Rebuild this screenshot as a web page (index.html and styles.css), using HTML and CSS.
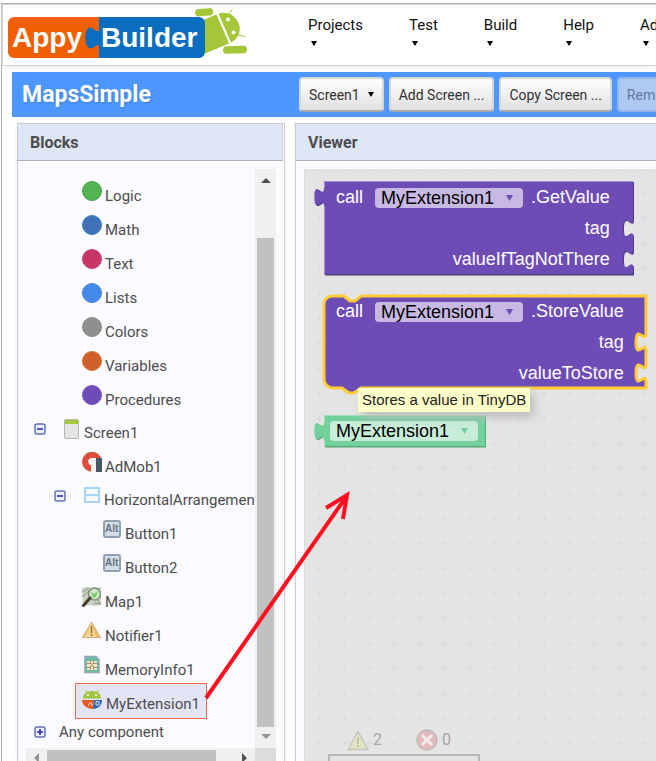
FILE: index.html
```html
<!DOCTYPE html>
<html lang="en">
<head>
<meta charset="utf-8">
<title>AppyBuilder - MapsSimple</title>
<link rel="stylesheet" href="styles.css">
</head>
<body>
<div class="app">
  <header class="top">
    <svg class="logo" width="242" height="50" viewBox="7 8 242 50" role="img" aria-label="AppyBuilder">
      <g fill="#a4c639">
        <path d="M203 20 216.500 14.500 229 43.500 204 54z"/>
        <path d="M218.500 13.500C228 10.500 236 16 239 24C241.500 32 238 38.500 231 42.500z"/>
        <rect x="195" y="8.500" width="18" height="7.500" rx="3.700" transform="rotate(-4 204 12)"/>
        <rect x="223" y="46" width="24" height="7.500" rx="3.700" transform="rotate(-2 235 50)"/>
        <path d="m229 14 3.500-5M238 35l7 1.500" stroke="#a4c639" stroke-width="1"/>
      </g>
      <circle cx="228" cy="19.500" r="2" fill="#fff"/><circle cx="233.500" cy="32.500" r="2" fill="#fff"/>
      <path d="M14 17H100V58H14a6 6 0 0 1-6-6V23a6 6 0 0 1 6-6z" fill="#f25f03"/>
      <path d="M99 17h100a6 6 0 0 1 6 6v29a6 6 0 0 1-6 6H99V45c-3-1-5 4-9 3.500c-6-2-6-19-1-21c4-1 6 5 10 3z" fill="#0b6dbd"/>
      <g class="logo-text"><text x="12" y="47">Appy</text><text x="101" y="47">Builder</text></g>
    </svg>
    <nav class="menu">
      <button type="button">Projects<svg width="6" height="5"><path d="M0 0h6L3 5z"/></svg></button>
      <button type="button">Test<svg width="6" height="5"><path d="M0 0h6L3 5z"/></svg></button>
      <button type="button">Build<svg width="6" height="5"><path d="M0 0h6L3 5z"/></svg></button>
      <button type="button">Help<svg width="6" height="5"><path d="M0 0h6L3 5z"/></svg></button>
      <button type="button">Admin<svg width="6" height="5"><path d="M0 0h6L3 5z"/></svg></button>
    </nav>
  </header>

  <div class="toolbar">
    <h1>MapsSimple</h1>
    <button type="button" aria-haspopup="menu">Screen1<svg width="6" height="5"><path d="M0 0h6L3 5z"/></svg></button>
    <button type="button">Add Screen ...</button>
    <button type="button">Copy Screen ...</button>
    <button type="button" disabled>Remove Screen</button>
  </div>

  <main class="panels">
    <section class="panel blocks">
      <h2>Blocks</h2>
      <div class="scroller">
        <ul class="tree">
          <li class="built-in">
            <ul>
              <li><a class="node" href="#"><i class="dot logic"></i>Logic</a></li>
              <li><a class="node" href="#"><i class="dot math"></i>Math</a></li>
              <li><a class="node" href="#"><i class="dot text"></i>Text</a></li>
              <li><a class="node" href="#"><i class="dot lists"></i>Lists</a></li>
              <li><a class="node" href="#"><i class="dot colors"></i>Colors</a></li>
              <li><a class="node" href="#"><i class="dot variables"></i>Variables</a></li>
              <li><a class="node" href="#"><i class="dot procedures"></i>Procedures</a></li>
            </ul>
          </li>
          <li>
            <div class="branch">
              <button type="button" class="toggle" aria-label="Collapse Screen1"><svg width="12" height="12"><rect x="1" y="1" width="10" height="10" rx="2"/><path d="M3 6h6"/></svg></button>
              <a class="node" href="#"><svg width="20" height="20"><rect x="2.500" y=".5" width="14" height="19" rx="1.500" fill="#e4e4e4" stroke="#b5b5b5"/><path d="M3 1h13v4H3z" fill="#a8c83c"/></svg>Screen1</a>
            </div>
            <ul>
              <li><a class="node" href="#"><svg width="20" height="20"><path d="M10 16.500A6.700 6.700 0 1 1 16.600 9" fill="none" stroke="#dc4f3e" stroke-width="6.500"/><path d="M6 9q1-3 5-3h3v14H9v-9z" fill="#f4f4f6"/><path d="M14 6h6v14h-6z" fill="#455a64"/></svg>AdMob1</a></li>
              <li>
                <div class="branch">
                  <button type="button" class="toggle" aria-label="Collapse HorizontalArrangement1"><svg width="12" height="12"><rect x="1" y="1" width="10" height="10" rx="2"/><path d="M3 6h6"/></svg></button>
                  <a class="node" href="#"><svg width="20" height="20"><path d="M3 2h14v14H3zM3 9h14" fill="#f4faff" stroke="#a5d4f8" stroke-width="2"/></svg>HorizontalArrangement1</a>
                </div>
                <ul>
                  <li><a class="node" href="#"><svg class="alt" width="20" height="20"><rect x="2" y="2" width="16" height="16" rx="2"/><text x="3" y="13">Alt</text></svg>Button1</a></li>
                  <li><a class="node" href="#"><svg class="alt" width="20" height="20"><rect x="2" y="2" width="16" height="16" rx="2"/><text x="3" y="13">Alt</text></svg>Button2</a></li>
                </ul>
              </li>
              <li><a class="node" href="#"><svg width="20" height="20"><path d="M0 1 5 0l5 1 9-1v18l-6 1-6-1-6 1z" fill="#c9d0c2"/><path d="m0 5 7-4M0 10 8 3M12 16l7 1M15 12l4 6" stroke="#8a9885" fill="none"/><circle cx="12.500" cy="7" r="6" fill="#cfe8c6" stroke="#7d8c79" stroke-width="1.500"/><path d="m9 5 3 2 4-3-2 6-3 1z" fill="#7fc675"/><path d="M8 11 1.500 18.500" stroke="#4a3c2f" stroke-width="3" stroke-linecap="round"/></svg>Map1</a></li>
              <li><a class="node" href="#"><svg width="20" height="20"><path d="M9.500 1 18.500 16.500H.5z" fill="#efbd67" stroke="#d1ad7c" stroke-linejoin="round"/><path d="M9.500 2 14 16H3z" fill="#f8d490"/><path d="M9.500 5v7M9.500 13v2" stroke="#8d7038" stroke-width="1.500"/></svg>Notifier1</a></li>
              <li><a class="node" href="#"><svg width="20" height="20"><path d="M3 1.500h11l3 3v13H3z" fill="#6cbba2" stroke="#91a9b4" stroke-width="1.500"/><path d="M5 6h10v9H5z" fill="#f1e8bd"/><path d="M5 8.500h3M12 8.500h3M5 12.500h3M12 12.500h3M8.500 6v3h3V6M8.500 15v-4h3v4" stroke="#a58f70" fill="none"/></svg>MemoryInfo1</a></li>
              <li><a class="node selected" href="#" aria-current="true"><svg width="20" height="20"><path d="M1 9.500C1 5 4 2 10 2s9 3 9 7.500z" fill="#9fc53a"/><path d="M5 3.500 3.500.5M15 3.500 16.500.5" stroke="#9fc53a"/><circle cx="6" cy="6" r="1" fill="#fff"/><circle cx="14" cy="6" r="1" fill="#fff"/><path d="M0 11h12l-1 9C5 20 0 16 0 11z" fill="#ea5b22"/><path d="M12 11h8c0 5-4 9-9 9z" fill="#1e6cb6"/><path d="m6 17 2.500-4 2 4M14 12.500h3v3.500h-3z" stroke="#f6d8cc" fill="none"/></svg>MyExtension1</a></li>
            </ul>
          </li>
          <li>
            <div class="branch last">
              <button type="button" class="toggle" aria-label="Expand Any component"><svg width="12" height="12"><rect x="1" y="1" width="10" height="10" rx="2"/><path d="M3 6h6M6 3v6"/></svg></button>
              <a class="node plain" href="#">Any component</a>
            </div>
          </li>
        </ul>
        <div class="vbar">
          <svg width="10" height="5"><path d="M0 5h10L5 0z" fill="#505050"/></svg>
          <div class="thumb"></div>
          <svg width="10" height="5"><path d="M0 0h10L5 5z" fill="#939393"/></svg>
        </div>
        <div class="hbar">
          <svg width="5" height="10"><path d="M5 0v10L0 5z" fill="#939393"/></svg>
          <div class="thumb"></div>
          <svg width="5" height="10"><path d="M0 0v10l5-5z" fill="#505050"/></svg>
        </div>
        <div class="corner"></div>
      </div>
    </section>

    <section class="panel viewer">
      <h2>Viewer</h2>
      <div class="canvas">
        <svg class="grid" width="100%" height="100%">
          <defs><pattern id="cross" width="25" height="25" patternUnits="userSpaceOnUse" x="3" y="12"><path d="M9.500 12.500h6M12.500 9.500v6" stroke="#dadada"/></pattern></defs>
          <rect width="100%" height="100%" fill="url(#cross)"/>
        </svg>

        <div class="block get-value">
          <svg class="shape" width="310" height="94">
            <path fill="#503a87" d="M1 1H310V39c0 12-10-10-10 9s10-3 10 9v13c0 12-10-10-10 9s10-3 10 9V94.500H1V26c0-12-9.600 10-9.600-9S1 20 1 8z"/>
            <path fill="#6d4db5" d="M0 0H309V38c0 12-10-10-10 9s10-3 10 9v13c0 12-10-10-10 9s10-3 10 9V93H0V25c0-12-9.600 10-9.600-9S0 19 0 7z"/>
            <path fill="none" stroke="#a28bd2" d="M.5 92V25M.5 7V.5H309"/>
          </svg>
          <div class="line">call <span class="pick"><select aria-label="Component"><option>MyExtension1</option></select><svg width="7" height="6"><path d="M0 0h7L3.500 6z" fill="#6d4db5"/></svg></span> .GetValue</div>
          <div class="line">tag</div>
          <div class="line">valueIfTagNotThere</div>
        </div>

        <div class="block store-value">
          <svg class="shape" width="324" height="94">
            <path fill="#6d4db5" stroke="#fc3" stroke-width="3" d="M8 1H20l6 5h5l6-5H322V38c0 12-10-10-10 9s10-3 10 9v13c0 12-10-10-10 9s10-3 10 9V93H37l-7 5h-5l-7-5H9a9 9 0 0 1-9-9V9a8 8 0 0 1 8-8z"/>
          </svg>
          <div class="line">call <span class="pick"><select aria-label="Component"><option>MyExtension1</option></select><svg width="7" height="6"><path d="M0 0h7L3.500 6z" fill="#6d4db5"/></svg></span> .StoreValue</div>
          <div class="line">tag</div>
          <div class="line">valueToStore</div>
        </div>

        <div class="block component">
          <svg class="shape" width="162" height="32">
            <path fill="#55a879" d="M1 1H162V32.500H1V26c0-12-9.600 10-9.600-9S1 20 1 8z"/>
            <path fill="#72d09c" d="M0 0H161V31H0V25c0-12-9.600 10-9.600-9S0 19 0 7z"/>
            <path fill="none" stroke="#9ddfb9" d="M.5 31V25M.5 7V.5H161"/>
          </svg>
          <div class="line"><span class="pick"><select aria-label="Component"><option>MyExtension1</option></select><svg width="7" height="6"><path d="M0 0h7L3.500 6z" fill="#72d09c"/></svg></span></div>
        </div>

        <div class="tip" role="tooltip">Stores a value in TinyDB</div>

        <div class="status">
          <div class="counts">
            <svg width="22" height="21"><path d="M11 1.500 21 19.500H1z" fill="#e4e4c4" stroke="#c4c4c4" stroke-width="1.500" stroke-linejoin="round"/><path d="M11 7v7M11 15v2" stroke="#b4b4b4" stroke-width="1.500"/></svg>
            <span>2</span>
            <svg width="22" height="22"><circle cx="11" cy="11" r="10" fill="#e3b9b9" stroke="#bebebe" stroke-width="1.500"/><path d="m6 6 10 10M16 6 6 16" stroke="#f0eded" stroke-width="3"/></svg>
            <span>0</span>
          </div>
          <div class="warnings"></div>
        </div>
      </div>
    </section>
  </main>
  <svg class="pointer" width="152" height="212" viewBox="202 490 152 212" aria-hidden="true"><path d="M206 698 346 497M326 508 347 495 343 519" fill="none" stroke="#ff1020" stroke-width="4"/></svg>
</div>
</body>
</html>
```

FILE: styles.css
```css
* { box-sizing: border-box; }

body {
  margin: 0;
  padding: 3px 0 0 1px;
  font: 15px/18px Roboto, sans-serif;
  color: #4d4d4d;
  background: #fff;
  overflow: hidden;
}

button { font: inherit; }
a { color: inherit; text-decoration: none; }
ul { list-style: none; margin: 0; padding: 0; }
svg { flex: none; }

.app {
  display: flex;
  flex-direction: column;
  height: calc(100vh - 3px);
  border: solid #aaa;
  border-width: 1px 0 0 1px;
}

.top {
  display: flex;
  flex: none;
  height: 62px;
  padding: 3px 0 0 4px;
  border: solid #d4d4d4;
  border-width: 1px 0 1px 1px;
  box-shadow: 0 2px 4px #eee;
}

.logo { display: block; }

.logo-text {
  font: bold 28px "Liberation Sans", sans-serif;
  fill: #fff;
}

.menu {
  display: flex;
  gap: 46px;
  margin-left: 59px;
  overflow: hidden;
}

.menu button {
  display: flex;
  flex: none;
  flex-direction: column;
  gap: 7px;
  padding: 8px 0 0;
  border: 0;
  background: none;
  color: #111;
}

.menu svg { margin-left: 3px; }

.toolbar {
  display: flex;
  flex: none;
  align-items: center;
  gap: 5px;
  height: 45px;
  margin: 6px 0 0 10px;
  background: #4d97ff;
  overflow: hidden;
}

h1 {
  flex: none;
  width: 282px;
  margin: 0;
  padding-left: 10px;
  font-size: 23px;
  line-height: 30px;
  font-weight: 700;
  color: #fff;
  text-shadow: 1px 1px 2px #4480cf;
}

.toolbar button {
  display: flex;
  flex: none;
  align-items: center;
  gap: 8px;
  height: 35px;
  padding: 0 8px;
  border: 2px solid #d6d6d6;
  border-bottom-color: #aaa;
  border-radius: 4px;
  background: linear-gradient(#fff, #e0e0e0);
  font-size: 14px;
  color: #333;
}

.toolbar button:disabled {
  border-color: #94b5e8;
  background: #aecaf2;
  color: #62789c;
}

.panels {
  display: flex;
  flex: 1;
  gap: 10px;
  min-height: 0;
  margin: 6px 0 0 15px;
}

.panel {
  display: flex;
  flex-direction: column;
  border: 1px solid #ccc;
  border-bottom: 0;
  background: #fafaff;
  box-shadow: 0 0 4px #eee;
}

.blocks { flex: none; width: 268px; }
.viewer { flex: 1; min-width: 0; border-right: 0; }

h2 {
  flex: none;
  height: 37px;
  margin: 0;
  padding: 0 12px;
  border-bottom: 1px solid #b0b0b0;
  background: #dce6f4;
  font-size: 16px;
  line-height: 37px;
  font-weight: 700;
}

.blocks h2 {
  margin-right: 1px;
  border-right: 1px solid #ccc;
}

.scroller {
  display: grid;
  grid-template: 1fr 20px / 1fr 21px;
  flex: 1;
  min-height: 0;
  margin: 8px 8px -7px;
}

.tree {
  padding: 6px 0 0 8px;
  overflow: hidden;
}

.tree ul { padding-left: 20px; }
.tree li > .node { margin-left: 21px; width: max-content; }

.node {
  display: flex;
  align-items: flex-start;
  gap: 3px;
  height: 34px;
  padding: 5px 6px 0;
  border: 1px solid transparent;
  line-height: 30px;
  white-space: nowrap;
}

.branch {
  display: flex;
  gap: 9px;
  height: 33px;
}

.branch .node {
  height: 33px;
  gap: 2px;
  line-height: 28px;
}

.toggle {
  width: 12px;
  height: 12px;
  margin-top: 10px;
  padding: 0;
  border: 0;
  background: none;
}

.toggle svg { display: block; }
.toggle rect { fill: #eceef8; stroke: #6272b2; stroke-width: 1.5; }
.toggle path { stroke: #2020c0; stroke-width: 1.5; }

.tree .selected {
  gap: 4px;
  height: 36px;
  border-color: #f4694c;
  background: #e4e4f8;
}

.branch.last { height: 26px; }
.branch.last .toggle { margin-top: 7px; }

.branch .plain {
  height: 26px;
  padding: 0 3px;
  line-height: 25px;
}

.dot {
  flex: none;
  width: 20px;
  height: 20px;
  border: 1px solid;
  border-radius: 50%;
}

.logic { background: #52b552; border-color: #45a04a; }
.math { background: #3e71b5; border-color: #3682bd; }
.text { background: #c73664; border-color: #c03a8c; }
.lists { background: #448aec; border-color: #4381d8; }
.colors { background: #8f8f8f; border-color: #858c85; }
.variables { background: #d05f2d; border-color: #d07920; }
.procedures { background: #6d4db5; border-color: #7350c3; }

.alt rect { fill: #d3dde8; stroke: #8fa1b3; stroke-width: 2; }
.alt text { font: bold 10px "Liberation Sans", sans-serif; fill: #68737e; }

.vbar, .hbar {
  display: flex;
  align-items: center;
  background: #f0f0f0;
}

.vbar { flex-direction: column; padding: 9px 0; }
.vbar .thumb { flex: 1; width: 17px; margin: 55px 0 7px; }
.hbar { padding: 0 8px; }
.hbar .thumb { width: 169px; height: 17px; margin: 0 auto 0 8px; }
.thumb { background: #c1c1c1; }
.corner { background: #dcdcdc; }

.canvas {
  position: relative;
  flex: 1;
  min-height: 0;
  margin: 8px 0 0 8px;
  background: #e4e4e4;
  overflow: hidden;
  box-shadow: inset 1px 1px #dcdcdc;
}

.grid { position: absolute; inset: 0; }

.block {
  position: absolute;
  left: 20px;
  padding: 1px 23px 0 12px;
  font: 18px/31px "Liberation Sans", sans-serif;
  color: #fff;
}

.get-value { top: 12px; }
.store-value { top: 126px; }
.component { top: 246px; padding: 0 7px 0 6px; }

.shape {
  position: absolute;
  left: 0;
  top: 0;
  overflow: visible;
}

.line {
  position: relative;
  display: flex;
  align-items: center;
  justify-content: flex-end;
  gap: 8px;
  height: 31px;
}

.pick {
  display: flex;
  align-items: center;
  width: 148px;
  margin-left: 4px;
  padding-right: 10px;
  border-radius: 4px;
  background: #c7b9e3;
}

.component .pick { margin: 0; background: #c7ecd7; }

.pick select {
  flex: 1;
  height: 20px;
  padding: 0 0 0 6px;
  border: 0;
  appearance: none;
  background: none;
  font: 18px/20px "Liberation Sans", sans-serif;
  color: #000;
}

.tip {
  position: absolute;
  left: 54px;
  top: 219px;
  padding: 3px 4px;
  background: #ffffca;
  box-shadow: 4px 5px 10px #bbb;
  font: 15px/18px "Liberation Sans", sans-serif;
  color: #222;
}

.status {
  position: absolute;
  left: 24px;
  bottom: 0;
  width: 152px;
}

.counts {
  display: flex;
  align-items: center;
  gap: 4px;
  padding: 0 0 3px 19px;
  font-size: 16px;
  color: #a4a4a4;
}

.counts span { min-width: 39px; }

.warnings {
  height: 7px;
  border: 2px solid #b8b8b8;
  border-bottom: 0;
}

.pointer {
  position: absolute;
  left: 202px;
  top: 490px;
  pointer-events: none;
}
```
